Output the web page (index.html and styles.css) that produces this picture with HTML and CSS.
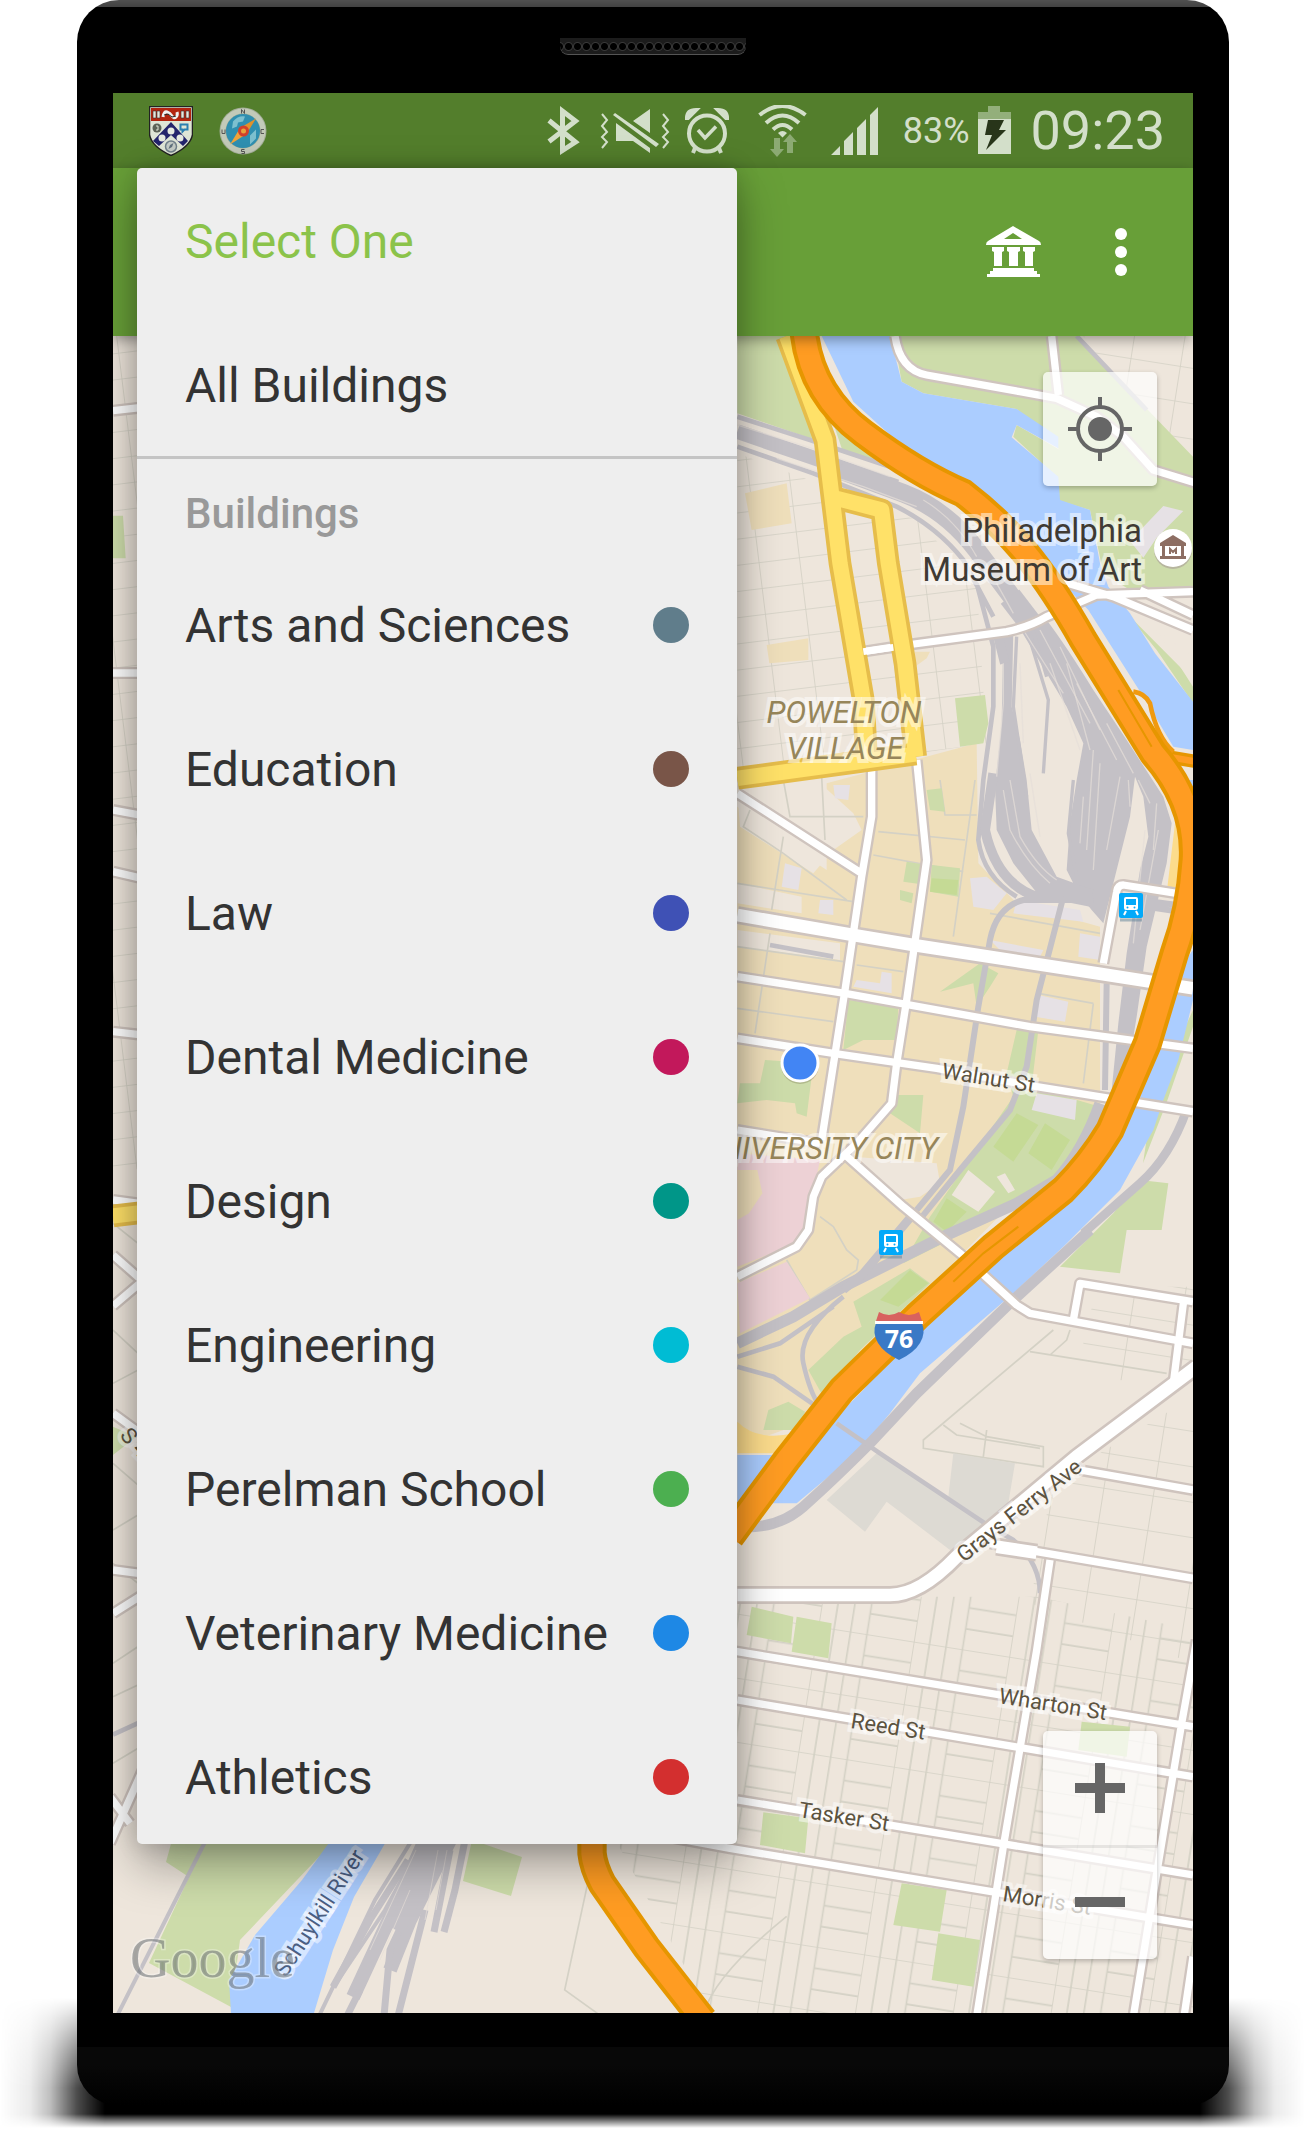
FILE: index.html
```html
<!DOCTYPE html>
<html lang="en">
<head>
    <meta charset="UTF-8">
    <meta name="viewport" content="width=device-width, initial-scale=1.0">
    <title>Campus Map</title>
    <link rel="stylesheet" href="styles.css">
</head>
<body>
    <div class="phone">
        <div class="speaker"></div>
        <div class="screen">
            <div class="status-bar">
                <div class="notifications">
                    <svg width="44" height="50" viewBox="149 104 44 50">
                        <path d="M149.500 104.500h43v28q-2 12-21.500 21q-19.500-9-21.500-21z" fill="#dfe5d6" stroke="#222" stroke-width="1.500"/>
                        <path d="M151 106h40v13h-40z" fill="#b3240f"/>
                        <path d="M153 109h3v7h-3zm4 0h3v7h-3zm24 0h3v7h-3zm5 0h3v7h-3z" fill="#e6e6dc" stroke="#333" stroke-width=".6"/>
                        <path d="M163 115q1-6 4-5t5 4 4 1 1-5" fill="none" stroke="#eee" stroke-width="3"/>
                        <path d="M164 113l4-1 4 3 4-1" fill="none" stroke="#222" stroke-width="1"/>
                        <path d="M171 120l17 19-5 5-12-11-12 11-6-5z" fill="#24246c"/>
                        <circle cx="171" cy="129" r="3.500" fill="#e6e9e0"/>
                        <circle cx="162" cy="136" r="3.500" fill="#e6e9e0"/>
                        <circle cx="180" cy="136" r="3.500" fill="#e6e9e0"/>
                        <circle cx="157" cy="126" r="4.500" fill="#5d6357"/>
                        <path d="M156 124h2v4h-2" fill="none" stroke="#dfe5d6"/>
                        <path d="M180.500 122.500h7v5h-3l-2 2v-2h-2z" fill="none" stroke="#2b7fb0" stroke-width="2"/>
                        <circle cx="171" cy="144.500" r="5.500" fill="#c5ccc6" stroke="#71808a" stroke-width="1.500"/>
                        <path d="M168.500 147l1.500-4 3.500-2-1.500 4z" fill="#60717d"/>
                    </svg>
                    <svg width="48" height="48" viewBox="219 105.500 48 48">
                        <circle cx="243" cy="129.500" r="23.500" fill="#a3ae98"/>
                        <circle cx="243" cy="129.500" r="20" fill="none" stroke="#c3cab9" stroke-width="5"/>
                        <circle cx="243" cy="129.500" r="17" fill="#2f8fb0"/>
                        <path d="M233 120q5-6 12-5l-2 5-5 1-1 4-5 2zM250 134l6-6v9l-6 6z" fill="#7dc0cf"/>
                        <path d="M256 117l-9.500 15.500-6.500-6z" fill="#e0912c"/>
                        <path d="M230 143l10-16.500 6.500 6z" fill="#f0a43a"/>
                        <circle cx="243.500" cy="129.500" r="5.500" fill="#d2402a"/>
                        <circle cx="243.500" cy="129.500" r="2.500" fill="#e8a23a"/>
                        <path d="M241.500 112v-4l3 4v-4M244.500 148h-3v2h3v2h-3M264 128h-3v4h3M222 128v4h3v-4" fill="none" stroke="#555" stroke-width="1"/>
                    </svg>
                </div>
                <div class="indicators">
                    <svg width="44" height="52" viewBox="546 103 44 52" fill="none" stroke="currentColor" stroke-width="5">
                        <path d="M552 139.500L578.500 119 565.500 109v39.500L578.500 140 552 118.500"/>
                    </svg>
                    <svg width="80" height="52" viewBox="598 103 80 52" fill="currentColor">
                        <path d="M605 112l5 6-5 6 5 6-5 5 5 5-5 6M666 112l5 6-5 6 5 6-5 5 5 5-5 6" fill="none" stroke="currentColor" stroke-width="2"/>
                        <path d="M616 113l2-2 44 31-3 3zM653 107v24l-17-12zM619 121l34 25v5l-17-12h-17z"/>
                    </svg>
                    <svg width="54" height="52" viewBox="686 103 54 52" fill="none" stroke="currentColor" stroke-width="4">
                        <circle cx="710" cy="131.500" r="18"/>
                        <path d="M701 128l7 8 11-11.500" stroke-width="3.500"/>
                        <path d="M690 116q0-8 9-8l-8 8zM730 116q0-8-9-8l8 8zM698 146l-2 5M722 146l2 5"/>
                    </svg>
                    <svg width="74" height="52" viewBox="748 103 74 52" fill="none" stroke="currentColor" stroke-width="4">
                        <path d="M762.500 113q22.500-18 46 0M769 121q16.500-15 33 0M776 127.500q9.500-9 19 0"/>
                        <path d="M781 131q4.500-4 9 0l-4.500 4.500z" fill="currentColor" stroke="none"/>
                        <path d="M777 136h6v11h4l-7 8-7-8h4zM790 151v-11h-4l7-8 7 8h-4v11z" fill="currentColor" stroke="none" opacity=".45"/>
                    </svg>
                    <svg width="68" height="52" viewBox="830 103 68 52" fill="currentColor">
                        <path d="M834 153l9-9v9zM847 153v-14l9-9v23zM860 153v-27l9-9v36zM873 153v-40l8-8v48z"/>
                    </svg>
                    <span class="battery-level">83%</span>
                    <svg width="45" height="52" viewBox="981 103 45 52" fill="currentColor">
                        <path d="M991 104h12v6h11v7h-33v-7h10z" opacity=".5"/>
                        <path d="M981 117h33v35h-33z"/>
                        <path d="M991 118h16l-5 10h7l-20 20 6-15h-7z" fill="#28351a"/>
                    </svg>
                    <span class="clock">09:23</span>
                </div>
            </div>
            <header class="app-bar">
                <button class="icon-button" type="button" aria-label="Building type">
                    <svg width="56" height="52" viewBox="985 228 56 52" fill="#fff">
                        <path fill-rule="evenodd" d="M1013 228l26 15q2 1 2 4h-55q0-3 2-4zM1013 235l-9 6h18z"/>
                        <path d="M992 249h12v4l-2 1v14h-8v-14l-2-1zM1007 249h13v4l-2 1v14h-9v-14l-2-1zM1023 249h12v4l-2 1v14h-8v-14l-2-1zM993 270h41v3h3v3h3v3h-53v-3h3v-3h3z"/>
                    </svg>
                </button>
                <button class="icon-button" type="button" aria-label="More options">
                    <svg width="12" height="48" viewBox="0 0 12 48" fill="#fff">
                        <circle cx="6" cy="6" r="6"/><circle cx="6" cy="24" r="6"/><circle cx="6" cy="42" r="6"/>
                    </svg>
                </button>
            </header>
            <main class="map">
                <svg class="map-canvas" viewBox="-1851 18 3240 5031" role="img" aria-label="Map of University City">
                    <defs>
                        <pattern id="blocks-north" width="122" height="78" patternUnits="userSpaceOnUse" patternTransform="rotate(-7)">
                            <path d="M0 0h122M0 0v78"/>
                        </pattern>
                        <pattern id="blocks-south" width="290" height="190" patternUnits="userSpaceOnUse" patternTransform="rotate(9)">
                            <path d="M0 0h290M0 0v190M48 0v190M98 0v190M148 0v190M148 64h142M148 128h142"/>
                        </pattern>
                        <pattern id="blocks-east" width="150" height="105" patternUnits="userSpaceOnUse" patternTransform="rotate(9)">
                            <path d="M0 0h150M0 0v105"/>
                        </pattern>
                        <g id="streets">
                            <path d="M22 1390L395 1630M425 1300V1460L395 1640 345 1980 275 2430M560 1290L590 1590 530 2010 500 2200 485 2320 380 2440 275 2540 250 2600 235 2700 200 2750 22 2840"/>
                            <path d="M22 1940L345 1990 900 2090 1389 2155M22 2125L310 2170 620 2215 920 2270 1389 2345M22 2400L270 2440M340 2470L520 2630 690 2770 860 2925 900 2950 1389 3040"/>
                            <path d="M1120 1900L1160 1685Q1163 1665 1180 1665L1340 1690M1030 2970L1050 2860 1389 2915M1360 2920L1330 3160"/>
                            <path d="M1050 3420L1389 3480M780 3640L920 3665 1389 3745M960 3690L920 3960 820 4550 740 5060"/>
                            <path d="M-1851 3720L22 3965 1389 4190M22 4110L1389 4340M22 4410L1389 4635M-300 4500L0 4555 1389 4785M1400 3930L1355 4180 1280 4630 1210 5060M1389 4880L1362 5060"/>
                            <path d="M495 18Q510 120 590 135L870 185 980 205 1100 260 1180 320 1270 420 1400 460M965 18L985 195"/>
                            <path d="M400 965L530 945 830 905Q900 890 950 860L1100 795 1389 785M980 750L1150 800 1389 900M1230 780L1389 855"/>
                            <path d="M-1851 242L-1700 225M-1851 1029H-1700M-1851 1440L-1700 1468M-1851 1625L-1700 1660M-1851 2105L-1700 2122M-1851 2610L-1700 2630M-1851 2775L-1760 2855M-1851 2928L-1700 2800M-1851 3250L-1700 3360M-1851 3850L-1700 3755M-1860 4540L-1700 4180M-1860 4400L-1800 4480"/>
                        </g>
                        <g id="avenues">
                            <path d="M22 1755L370 1815 550 1845 1100 1930 1389 1975"/>
                            <path d="M1400 3110L1040 3380 680 3680Q570 3795 480 3795H22M800 3650L920 3668"/>
                        </g>
                        <g id="yellow-roads">
                            <path d="M170 18L285 330 330 700 400 1110 410 1290M320 505L455 540 475 700 525 1000 557 1280M22 1345L557 1272"/>
                            <path d="M-1851 2658L-1700 2640"/>
                        </g>
                        <path id="expressway" d="M222 0Q240 190 400 310T700 490C830 590 930 700 1060 930L1270 1270Q1400 1420 1390 1590 1380 1740 1333 1870L1252 2140 1140 2400Q1080 2500 1000 2580L790 2750 560 2960 335 3180 170 3390 0 3620M-414 4500V4570Q-410 4610 -384 4660L-252 4850-80 5070"/>
                        <g id="transit">
                            <path d="M1 27h22" stroke="#5d8198" stroke-opacity=".5" stroke-width="3"/>
                            <rect width="24" height="25" rx="2" fill="#03a9f9"/>
                            <rect x="5" y="4" width="14" height="13" rx="2" fill="#fff"/>
                            <path d="M7 6h10v6H7z" fill="#03a9f9"/>
                            <circle cx="8.500" cy="14.500" r="1" fill="#03a9f9"/><circle cx="15.500" cy="14.500" r="1" fill="#03a9f9"/>
                            <path d="M7 18l-2 4M17 18l2 4" stroke="#fff" stroke-width="2"/>
                        </g>
                    </defs>

                    <rect class="land" x="-1851" y="18" width="3240" height="5031"/>

                    <!-- residential blocks -->
                    <path fill="url(#blocks-north)" d="M22 370L560 570 740 760 770 1240 22 1350zM-1851 18h160v2500h-160z"/>
                    <path fill="url(#blocks-east)" d="M1060 18h329v430L1100 100zM1110 2870h279v300L1060 3140V3000zM1060 3400L1389 3200v800L900 3820 960 3500z"/>
                    <path fill="url(#blocks-south)" d="M22 3800h900l467 100v1149H-60L-360 4500 22 4400z"/>
                    <path class="lane" d="M-1851 2680l150 120M-1851 3000l150 140M-1851 3160l150-80M-1851 3400l150 130M-1851 3600l150-90M-1851 4000l150-100M-1851 3700l150 120M-1851 4100l150-70M-1851 4300l150-90M-414 4600l-82 380 280 200M-80 5049q40-120 250-290"/>
                    <path class="lane" d="M970 3000L580 3330v25l360 55v-60l-170-30-80-40M640 3285l40 30 250 40M900 3065l410 65M770 3300l-10 80M1020 3000l-10 30-50 45"/>

                    <!-- university -->
                    <path fill="#efdfbb" d="M22 1430L200 1560 290 1620 290 1360 740 1240 745 1600 860 1720 1110 1790 1110 2350 640 2830 300 3250 22 3350zM45 490L170 460 185 580 65 600zM110 945L235 925V990L118 1000zM555 965h45l-10 20-35 25z"/>
                    <path fill="#eee6dc" d="M22 1390L260 1350 370 1450 395 1500 310 1560 250 1630 30 1490zM22 1660L215 1700V1750L22 1720zM22 1800L330 1840V1890L22 1850zM370 2480L620 2500 630 2560 570 2600 510 2610z"/>
                    <path class="lane" d="M22 1660L370 1715M160 1350L180 1460H400M275 1340L285 1530M160 1520L125 1740M60 1440L40 1490 160 1570 350 1710M22 1850L340 1895M22 2035L310 2075M120 1810L75 2110M430 1575L700 1625M445 1505L705 1530M380 1905L520 1925M735 1350L670 1820M630 1350L645 1455H740M925 1990L1090 2020M1090 2020L1060 2260M780 1750L1110 1810M270 2660L310 2690 350 2760 385 2790 380 2820 240 2910 170 2790"/>
                    <path fill="#edd1d5" d="M22 2470L270 2490 235 2660 200 2740 22 2810zM22 2860L170 2795 240 2905 30 3010z"/>
                    <path fill="#efdfbb" d="M22 2520h60l15 70-40 60-35 20z"/>

                    <!-- parks -->
                    <path class="park" d="M22 18H170L255 330 22 250zM280 215L350 300 450 400 340 370 300 250zM490 18H1040L1389 380V790L1200 780 1120 730 1080 540 980 510 980 440 850 320 860 285 990 360 860 237 580 190 515 155zM1190 850L1389 1050V1120L1280 960z"/>
                    <path class="park" d="M675 1105L765 1095 775 1180 760 1240 690 1250zM590 1380l45-5 10 70-45-5zM530 1595l60 10v60l-70-10zM605 1605l85 10-5 85-85-15zM510 1680l40 10-5 30-35-10zM355 2010L505 2030 500 2130 400 2130 340 2160zM630 1985L750 1900 805 1930 780 1970 740 2030 730 1960zM105 2190L250 2200 230 2360 200 2350 195 2320 110 2310 22 2320 30 2260 90 2260zM500 2295h80L570 2410 480 2350z"/>
                    <path class="park" d="M860 2100L925 2100 905 2270 1110 2330 1080 2470 960 2560 640 2740 520 2800 600 2660 850 2300 830 2230zM370 2915L540 2815 600 2860 390 3060 280 3200 235 3120 340 3020 395 2990zM100 3300l15-60 60-25 50 30-20 55zM1230 2550L1315 2560 1295 2700H1190L1170 2830 990 2810 1150 2650zM1389 2040v50l-80 230-70 180 30-200z"/>
                    <path class="park" d="M65 3830L190 3860 183 3940 50 3915zM200 3860L305 3880 295 3985 185 3965zM100 4447L235 4465 225 4570 90 4545zM515 4660L650 4680 630 4805 490 4785zM625 4810L750 4830 730 4970 605 4950zM1055 4175L1200 4190 1190 4280 1045 4260zM-1851 557h30l8 128h-38zM-1851 3290l70 30-70 55z"/>
                    <path fill="#c5da95" d="M860 2350L925 2385 850 2495 790 2450zM945 2380L1020 2430 965 2520 895 2470zM650 2605l60 40-60 60-40-30zM605 1645l80 5-5 45-80-10zM540 2820l55 40-90 70-55-20z"/>
                    <path class="land" d="M715 2520L795 2585 745 2645 665 2595zM800 2540l25-10 30 50-20 10zM1280 900l109 80v90z"/>
                    <path fill="#e6e1e5" d="M720 1645L770 1640 830 1690 790 1740 730 1730zM860 1710L1050 1740 1060 1775 850 1750zM1050 1810l60 10v70l-65-10zM925 1995l90 20-10 60-90-15zM920 2290l120 20-5 60-130-30zM310 1365h50l-5 45-40-5zM165 1600l50 15-10 65-50-10zM270 1710h40v45l-45-5zM380 1950l70 10 5-35 30 5v60l-115-20zM1300 528l60 15-80 80-40 60-40-50zM780 1830l160 30-10 20-120-20z"/>
                    <path fill="#dddad3" d="M440 3370L770 3575 730 3640 660 3660 470 3515 405 3605 290 3510zM670 3370L855 3400 830 3550 770 3575 655 3500z"/>
                    <path fill="#fcdc8c" d="M1335 1480h20v210h-45zM22 3275q60 60 170 35l-50 60H22z"/>

                    <!-- river -->
                    <path class="water" d="M275 18H480L515 155 580 190 860 237 985 320V355L860 285 845 322 985 440 990 510 1080 540 1110 700 1135 770 1200 850 1275 970 1389 1115V1260L1330 1250 1240 1100 1075 840 960 720 740 490 530 360 370 215zM1370 1350h19v60zM1389 1860V2010L1345 2190 1300 2310 1270 2400 1170 2580 1000 2750 850 2890 570 3130 480 3250 380 3370 200 3520H22V3375H150L260 3320 400 3180 700 2800 1150 2400 1290 2000z"/>

                    <!-- railway -->
                    <g class="rail">
                        <path stroke-width="44" d="M22 305L240 380 500 470"/>
                        <path stroke-width="56" d="M330 420L520 490Q650 540 740 660L890 860"/>
                        <path stroke-width="14" d="M22 260L240 330 480 410M22 350L250 430 500 530Q620 590 700 690L790 860M1040 18L1250 240M740 760L790 950V1130L760 1350 745 1530Q760 1640 860 1700"/>
                        <path stroke-width="70" d="M840 800L940 930"/>
                        <path stroke="none" fill="#c4c1c6" d="M860 880L950 870Q1010 950 1090 1080L1190 1230 1300 1400 1325 1480 1310 1600 1250 1850 1220 2060 1200 2180 1140 2330 1165 2080 1190 1870 1230 1620 1255 1520 1240 1400 1215 1340 1200 1460 1165 1600 1120 1780 1085 1740 1045 1690 1010 1620 1020 1480 1040 1350 1060 1240 1010 1130z"/>
                        <path stroke="none" fill="#c4c1c6" d="M820 900H850L845 1130 870 1230 890 1350 905 1500 980 1640 1090 1680 1080 1730 930 1700 850 1600 800 1500 795 1370 815 1180z"/>
                        <path stroke-width="30" d="M800 900L825 1000M790 1330L765 1500Q800 1660 920 1700H1080"/>
                        <path stroke-width="10" d="M860 920L850 1130 890 1400M900 930L955 1110 940 1330M900 870L950 1040M960 950L1060 1180M1030 1350L1015 1510 1040 1640"/>
                        <path stroke-width="18" d="M1130 1960L1125 2280M1090 1710H880Q800 1730 780 1830L745 2030 700 2330 660 2520 560 2640M1000 1700L920 2010 890 2210 840 2340 690 2520 560 2680M1250 1730l130 20M1230 1710l150 20"/>
                        <path stroke-width="34" d="M1110 2320Q1060 2460 980 2550L860 2620 640 2720 340 2870 190 2960 22 3040"/>
                        <path stroke-width="26" d="M560 2640L400 2830 340 2880M1370 2340Q1320 2480 1230 2560L1060 2710"/>
                        <path stroke-width="32" d="M1080 2700L850 2910 560 3190 420 3340Q300 3460 220 3530T22 3590"/>
                        <path stroke-width="14" d="M340 2900Q200 3010 220 3100T270 3230M22 3080L150 3040 310 2930M22 3110L130 3140 260 3230M320 3280L450 3370 780 3590 850 3630Q930 3700 930 3790M-1851 4214l150-69M120 1845L310 1880"/>
                    </g>
                    <path class="rail-gap" d="M22 285L230 350 480 440M140 385L400 470 560 530M580 510Q680 570 740 680M800 760L850 850M820 1000V1120L800 1340M880 900L1000 1090M930 900L1080 1180M990 950L1110 1200M900 1330L930 1520M840 1350L870 1520Q920 1610 980 1650M1130 1180L1210 1330M1170 1340L1130 1560M1285 1500L1230 1800M1060 1400L1050 1540M1195 1350L1200 1430M1245 1500L1210 1840"/>
                    <path class="rail-gap" d="M820 1380L840 1500Q890 1600 960 1660M870 1000L880 1240M960 1000L1050 1260M1010 1000L1080 1260M1040 1060L1160 1290M1090 1260L1070 1560M1110 1300L1090 1620M1225 1350L1260 1420M1280 1420L1270 1560"/>

                    <use href="#streets" class="casing" stroke-width="36"/>
                    <use href="#avenues" class="casing" stroke-width="54"/>
                    <use href="#streets" class="street" stroke-width="22"/>
                    <use href="#avenues" class="street" stroke-width="38"/>
                    <use href="#yellow-roads" stroke="#e6bd4b" stroke-width="68"/>
                    <use href="#yellow-roads" stroke="#ffe168" stroke-width="46"/>
                    <path class="street" stroke-width="20" d="M400 965L490 952"/>
                    <path d="M1310 1280L1400 1295" fill="none" stroke="#e69600" stroke-width="40"/>
                    <path d="M1210 1085Q1245 1090 1260 1120 1280 1220 1330 1265" fill="none" stroke="#f09a10" stroke-width="14"/>
                    <path d="M1300 1278L1400 1295" fill="none" stroke="#ff9c22" stroke-width="20"/>
                    <use href="#expressway" stroke="#e69600" stroke-width="88"/>
                    <use href="#expressway" stroke="#ff9c22" stroke-width="64"/>
                    <path d="M670 2855L760 2770 865 2690M1165 1080L1265 1250" fill="none" stroke="#e69600" stroke-width="6"/>

                    <!-- south west corner and labels, in screen units -->
                    <g transform="translate(-2190 -990) scale(3)">
                        <path class="park" d="M172 1840L166 1862 189 1877 149 1963 231 2007 240 1940 335 1840zM472 1840L522 1857 511 1896 463 1881z"/>
                        <path class="water" d="M331 1840L302 1880 255 1935 229 1980 231 2013H314L333 1950 354 1897 387 1840z"/>
                        <path class="rail" stroke-width="4" d="M206 1840L117 2016M412 1840L375 1900 319 2016M418 1850L385 1910 335 1985"/>
                        <path class="rail" stroke-width="14" d="M425 1840L398 1900 353 1997M450 1840L410 1920 390 1970"/>
                        <path class="rail" stroke-width="7" d="M408 1860L370 1920 333 1987M432 1860L390 1950 384 2016M465 1840L455 1890 444 1932M450 1850L434 1932M360 1990L347 2016M425 1910L398 2016"/>
                        <path class="rail" stroke-width="18" d="M440 1840L420 1880 396 1930"/>
                        <path class="rail-gap" d="M416 1850L370 1950M438 1850L425 1920M410 1890L380 1960M447 1850L436 1910"/>

                        <g class="place">
                            <text x="1142" y="542" text-anchor="end">Philadelphia</text>
                            <text x="1142" y="581" text-anchor="end">Museum of Art</text>
                        </g>
                        <g class="district">
                            <text x="844" y="723" text-anchor="middle">POWELTON</text>
                            <text x="845" y="759" text-anchor="middle">VILLAGE</text>
                            <text x="938" y="1159" text-anchor="end">UNIVERSITY CITY</text>
                        </g>
                        <g class="road-name">
                            <text transform="translate(941 1078) rotate(9)">Walnut St</text>
                            <text transform="translate(998 1703) rotate(9)">Wharton St</text>
                            <text transform="translate(850 1728) rotate(9)">Reed St</text>
                            <text transform="translate(798 1817) rotate(9)">Tasker St</text>
                            <text transform="translate(1002 1901) rotate(9)">Morris St</text>
                            <text transform="translate(964 1563) rotate(-38)">Grays Ferry Ave</text>
                            <text transform="translate(119 1436) rotate(48)">S 4</text>
                        </g>
                        <text class="river-name" transform="translate(286 1978) rotate(-57)">Schuylkill River</text>
                        <text class="watermark" x="130" y="1977">Google</text>

                        <circle cx="1173" cy="550" r="19" fill="#a89d98" opacity=".6"/>
                        <circle cx="1173" cy="548" r="19" fill="#fff"/>
                        <path fill="#8d6e63" fill-rule="evenodd" d="M1173 535l13 8v3h-2v10h2v3h-26v-3h2v-10h-2v-3zM1165 546v10h16v-10z"/>
                        <path d="M1170 554v-5l3 3 3-3v5" fill="none" stroke="#8d6e63" stroke-width="2"/>
                        <use href="#transit" x="1119" y="893"/>
                        <use href="#transit" x="879" y="1230"/>
                        <circle cx="800" cy="1065" r="19" fill="#5a5030" opacity=".25"/>
                        <circle cx="800" cy="1063" r="18" fill="#4285f4" stroke="#fff" stroke-width="3"/>

                        <path d="M876 1323q-4 10 2 20 6 10 21 17 15-7 21-17 6-10 2-20z" fill="#3a79c6"/>
                        <path d="M879 1312q10 6 20 0 10 6 20 0l3 9h-46z" fill="#d8625f"/>
                        <path d="M875 1321h48v3h-48z" fill="#fff"/>
                        <text class="route" x="899" y="1348" text-anchor="middle">76</text>
                    </g>
                </svg>
                <div class="map-control locate">
                    <button type="button" aria-label="My location">
                        <svg width="64" height="64" viewBox="0 0 64 64" fill="none" stroke="#666" stroke-width="4">
                            <circle cx="32" cy="32" r="22"/>
                            <circle cx="32" cy="32" r="12" fill="#666" stroke="none"/>
                            <path d="M32 0v9M32 55v9M0 32h9M55 32h9"/>
                        </svg>
                    </button>
                </div>
                <div class="map-control zoom">
                    <button type="button" aria-label="Zoom in">
                        <svg width="50" height="50" viewBox="0 0 50 50"><path d="M20 0h10v20h20v10H30v20H20V30H0V20h20z" fill="#666"/></svg>
                    </button>
                    <button type="button" aria-label="Zoom out">
                        <svg width="50" height="10" viewBox="0 0 50 10"><path d="M0 0h50v10H0z" fill="#666"/></svg>
                    </button>
                </div>
            </main>
            <nav class="menu">
                <button class="menu-item current" type="button">Select One</button>
                <button class="menu-item" type="button">All Buildings</button>
                <h2 class="menu-heading">Buildings</h2>
                <button class="menu-item" type="button">Arts and Sciences <i class="dot arts"></i></button>
                <button class="menu-item" type="button">Education <i class="dot education"></i></button>
                <button class="menu-item" type="button">Law <i class="dot law"></i></button>
                <button class="menu-item" type="button">Dental Medicine <i class="dot dental"></i></button>
                <button class="menu-item" type="button">Design <i class="dot design"></i></button>
                <button class="menu-item" type="button">Engineering <i class="dot engineering"></i></button>
                <button class="menu-item" type="button">Perelman School <i class="dot perelman"></i></button>
                <button class="menu-item" type="button">Veterinary Medicine <i class="dot veterinary"></i></button>
                <button class="menu-item" type="button">Athletics <i class="dot athletics"></i></button>
            </nav>
        </div>
    </div>
</body>
</html>
```
FILE: styles.css
```css
body {
    margin: 0;
    padding: 0 76px 25px 77px;
    background-color: #fff;
    font-family: Roboto, sans-serif;
    overflow-x: hidden;
}

button {
    font-family: inherit;
    border: none;
    background: none;
    padding: 0;
    cursor: pointer;
}

svg {
    display: block;
    flex: none;
}

.phone {
    position: relative;
    box-sizing: border-box;
    max-width: 1152px;
    margin: 0 auto;
    padding: 0 36px 92px;
    border-radius: 42px 42px 40px 40px;
    background: linear-gradient(#000, #000) 0 7px / 100% calc(100% - 65px) no-repeat,
        linear-gradient(#505050, #424242 7px, #080808 8px, #080808 calc(100% - 40px), #000);
    background-color: #000;
}

/* floor shadow */
.phone::before {
    content: "";
    position: absolute;
    z-index: -1;
    left: -77px;
    right: -76px;
    bottom: -23px;
    height: 130px;
    background: linear-gradient(90deg, transparent, rgba(0, 0, 0, 0.08) 30px, rgba(0, 0, 0, 0.25) 50px, rgba(0, 0, 0, 0.7) 77px, #000 105px, #000 calc(100% - 105px), rgba(0, 0, 0, 0.7) calc(100% - 77px), rgba(0, 0, 0, 0.25) calc(100% - 50px), rgba(0, 0, 0, 0.08) calc(100% - 30px), transparent);
    -webkit-mask-image: linear-gradient(transparent, rgba(0, 0, 0, 0.6) 50px, #000 90px, #000 116px, transparent);
    mask-image: linear-gradient(transparent, rgba(0, 0, 0, 0.6) 50px, #000 90px, #000 116px, transparent);
}

.speaker {
    box-sizing: border-box;
    width: 186px;
    height: 55px;
    margin: 0 auto 38px;
    border-top: 38px solid transparent;
    border-radius: 0 0 8px 8px;
    background: radial-gradient(circle, #000 3px, #383838 4px, transparent 5px) 4px 0 / 9px 17px padding-box, #1c1c1c padding-box;
    box-shadow: inset 0 -1px 0 #555;
}

.screen {
    position: relative;
    overflow: hidden;
}

.status-bar {
    display: flex;
    justify-content: space-between;
    align-items: center;
    height: 75px;
    padding: 0 28px 0 36px;
    background-color: #537e2c;
    color: #d3dfca;
}

.notifications {
    display: flex;
    align-items: center;
    gap: 26px;
}

.indicators {
    display: flex;
    align-items: center;
    gap: 8px;
}

.battery-level {
    font-size: 36px;
}

.clock {
    font-size: 54px;
}

.app-bar {
    position: relative;
    z-index: 1;
    display: flex;
    justify-content: flex-end;
    align-items: center;
    height: 168px;
    padding-right: 18px;
    background-color: #689f38;
    box-shadow: 0 4px 12px rgba(0, 0, 0, 0.35);
}

.icon-button {
    display: flex;
    justify-content: center;
    align-items: center;
    width: 108px;
    height: 144px;
}

.map {
    position: relative;
}

.map-canvas {
    width: 100%;
    height: auto;
}

.map-canvas pattern path,
.lane {
    fill: none;
    stroke: #d4d1c5;
    stroke-width: 5;
}

.land {
    fill: #eee6dc;
}

.park {
    fill: #cddcaa;
}

.water {
    fill: #abcdff;
}

.rail {
    fill: none;
    stroke: #c4c1c6;
}

.rail-gap {
    fill: none;
    stroke: #e6ded8;
    stroke-width: 4;
    opacity: 0.7;
}

.map-canvas use {
    fill: none;
    stroke-linejoin: round;
}

.casing {
    stroke: #cfc4be;
}

.street {
    fill: none;
    stroke: #fff;
}

g .rail-gap {
    stroke-width: 1;
}

.map-canvas text {
    paint-order: stroke;
    stroke: rgba(255, 255, 255, 0.5);
    stroke-width: 8px;
}

.place {
    font-size: 33px;
    fill: #3f3a34;
}

.district {
    font-size: 31px;
    font-style: italic;
    fill: #97865a;
}

.road-name {
    font-size: 22px;
    fill: #5c5340;
}

.river-name {
    font-size: 22px;
    fill: #4b5f83;
}

.map-canvas .watermark {
    font-family: "Liberation Serif", serif;
    font-size: 56px;
    fill: rgba(90, 95, 100, 0.5);
    stroke: rgba(255, 255, 255, 0.3);
    stroke-width: 3px;
}

.map-canvas .route {
    font-family: "Open Sans", sans-serif;
    font-size: 25px;
    font-weight: 700;
    fill: #fff;
    stroke: none;
}

.map-control {
    position: absolute;
    right: 36px;
    width: 114px;
    border-radius: 5px;
    background-color: rgba(255, 255, 255, 0.7);
    box-shadow: 0 2px 5px rgba(0, 0, 0, 0.25);
}

.map-control button {
    display: flex;
    justify-content: center;
    align-items: center;
    width: 100%;
    height: 114px;
}

.map-control button + button {
    box-shadow: inset 0 3px 0 rgba(0, 0, 0, 0.08);
}

.locate {
    top: 36px;
}

.zoom {
    bottom: 54px;
}

.menu {
    position: absolute;
    z-index: 2;
    top: 75px;
    bottom: 169px;
    left: 24px;
    width: 600px;
    max-width: 90%;
    overflow: hidden;
    border-radius: 5px;
    background-color: #eee;
    box-shadow: 0 20px 48px rgba(0, 0, 0, 0.35), 0 0 24px rgba(0, 0, 0, 0.15);
}

.menu-item {
    display: flex;
    justify-content: space-between;
    align-items: center;
    box-sizing: border-box;
    width: 100%;
    height: 144px;
    padding: 2px 48px 0;
    font-size: 48px;
    color: #333;
    text-align: left;
}

.menu-item.current {
    color: #8bc34a;
}

.menu-heading {
    box-sizing: border-box;
    height: 96px;
    margin: 0;
    padding: 0 48px;
    border-top: 3px solid #c4c4c4;
    font-size: 42px;
    font-weight: 500;
    line-height: 110px;
    color: #999;
}

.dot {
    width: 36px;
    height: 36px;
    border-radius: 50%;
}

.arts { background-color: #607d8b; }
.education { background-color: #795548; }
.law { background-color: #3f51b5; }
.dental { background-color: #c2185b; }
.design { background-color: #009688; }
.engineering { background-color: #00bcd4; }
.perelman { background-color: #4caf50; }
.veterinary { background-color: #1e88e5; }
.athletics { background-color: #d32f2f; }
```
